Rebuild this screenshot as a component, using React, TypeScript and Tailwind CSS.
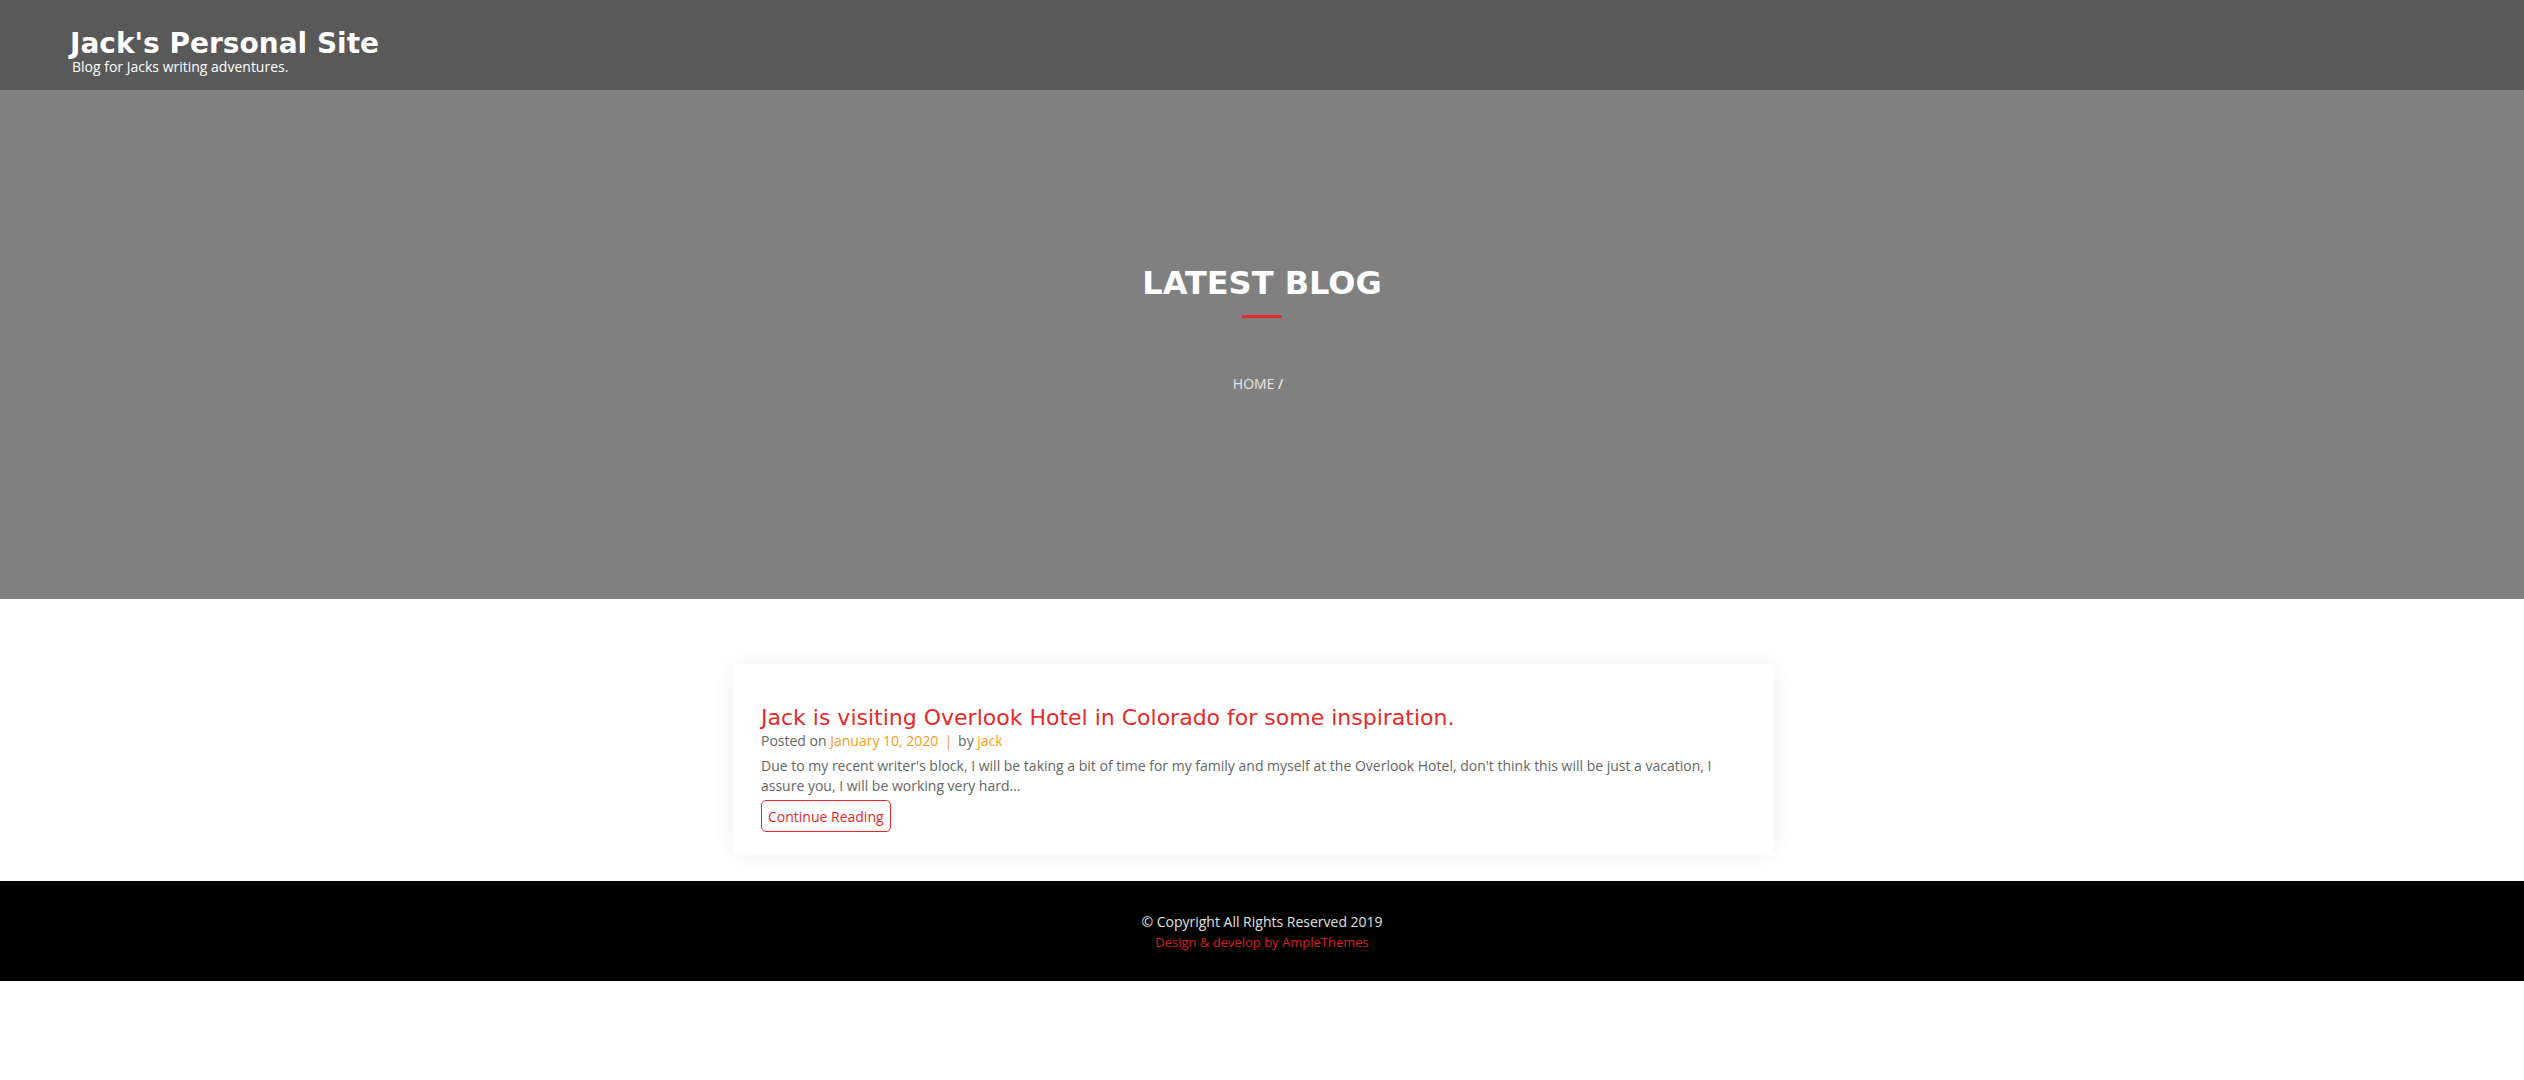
const heading = "font-['DejaVu_Sans',sans-serif]";
const body = "font-['Open_Sans',sans-serif]";

const Header = () => (
  <header className="h-[90px] bg-[#595959] pl-[70px] pt-[28px]">
    <h1 className={`${heading} text-[28px] leading-[31px] font-bold text-white`}>
      Jack's Personal Site
    </h1>
    <p className={`${body} text-[14px] leading-[16px] text-white pl-[2px]`}>
      Blog for Jacks writing adventures.
    </p>
  </header>
);

const Hero = () => (
  <section className="h-[509px] bg-[#808080] flex flex-col items-center pt-[174px]">
    <h2 className={`${heading} text-[32px] leading-[38px] font-bold text-white`}>
      LATEST BLOG
    </h2>
    <div className="mt-[13px] h-[3px] w-[40px] bg-[#e32b2b]" />
    <div className={`${body} mt-[56px] text-[14px] leading-[20px] pr-[8px]`}>
      <span className="text-[#e6e6e6]">HOME</span>
      <span className="text-white"> /</span>
    </div>
  </section>
);

const PostCard = () => (
  <article className="w-[1040px] bg-white rounded-[4px] shadow-[0_0_24px_rgba(0,0,0,0.07)] pl-[28px] pr-[28px] pt-[40px] pb-[23px]">
    <h3 className={`${heading} text-[22px] leading-[27px] text-[#e42b2b]`}>
      Jack is visiting Overlook Hotel in Colorado for some inspiration.
    </h3>
    <div className={`${body} text-[14px] leading-[20px] text-[#666]`}>
      Posted on <span className="text-[#f59e1c]">January 10, 2020</span>
      <span className="text-[#f59e1c] px-[6px]">|</span>
      by <span className="text-[#f59e1c]">jack</span>
    </div>
    <p className={`${body} mt-[5px] text-[14px] leading-[20px] text-[#666]`}>
      Due to my recent writer's block, I will be taking a bit of time for my family and myself at the Overlook Hotel, don't think this will be just a vacation, I assure you, I will be working very hard...
    </p>
    <button
      className={`${body} mt-[4px] h-[32px] px-[6px] border border-[#e42b2b] rounded-[5px] text-[14px] text-[#e42b2b] bg-white`}
    >
      Continue Reading
    </button>
  </article>
);

const Footer = () => (
  <footer className={`${body} h-[100px] bg-black flex flex-col items-center pt-[31px]`}>
    <p className="text-[14px] leading-[20px] text-[#e0e0e0]">© Copyright All Rights Reserved 2019</p>
    <p className="text-[13px] leading-[20px] text-[#d42020]">Design &amp; develop by AmpleThemes</p>
  </footer>
);

export default function App() {
  return (
    <div className="min-h-[1080px] bg-white">
      <Header />
      <Hero />
      <main className="flex justify-center pr-[18px] pt-[65px] pb-[26px]">
        <PostCard />
      </main>
      <Footer />
    </div>
  );
}
